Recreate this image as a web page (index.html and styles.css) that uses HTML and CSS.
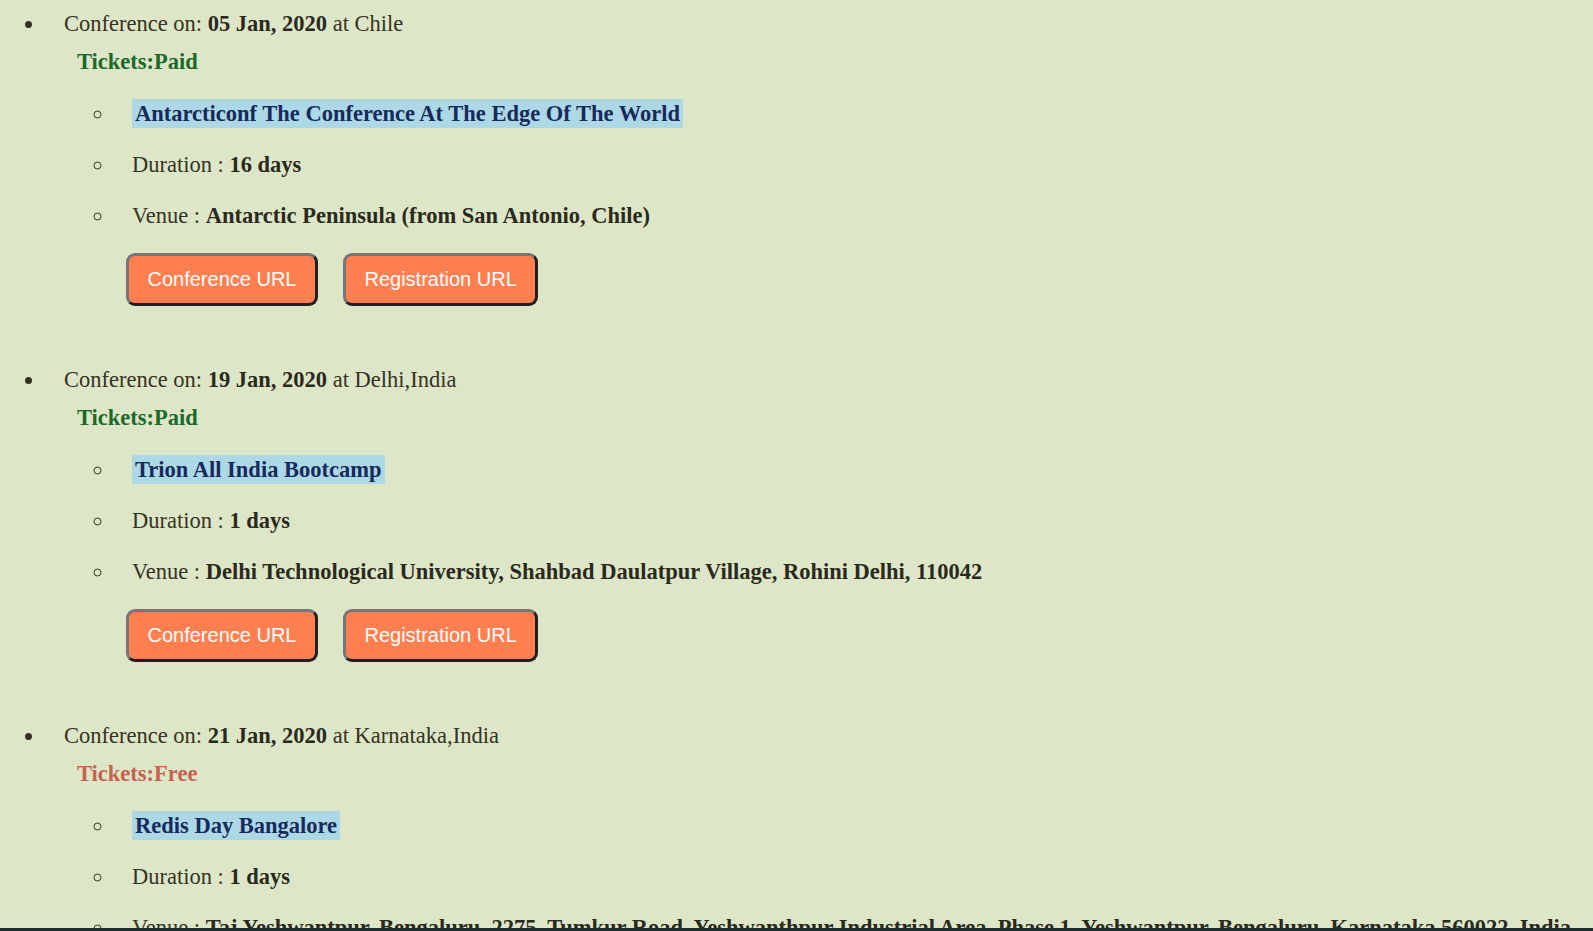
FILE: index.html
```html
<!DOCTYPE html>
<html lang="en">
<head>
<meta charset="utf-8">
<title>Conferences</title>
<link rel="stylesheet" href="styles.css">
</head>
<body>
<ul class="conferences">
  <li class="conf">
    Conference on: <b>05 Jan, 2020</b> at Chile
    <div class="tickets paid">Tickets:Paid</div>
    <ul class="details">
      <li><span class="title">Antarcticonf The Conference At The Edge Of The World</span></li>
      <li>Duration : <b>16 days</b></li>
      <li>Venue : <b>Antarctic Peninsula (from San Antonio, Chile)</b></li>
    </ul>
    <div class="buttons">
      <button class="btn">Conference URL</button>
      <button class="btn">Registration URL</button>
    </div>
  </li>
  <li class="conf">
    Conference on: <b>19 Jan, 2020</b> at Delhi,India
    <div class="tickets paid">Tickets:Paid</div>
    <ul class="details">
      <li><span class="title">Trion All India Bootcamp</span></li>
      <li>Duration : <b>1 days</b></li>
      <li>Venue : <b>Delhi Technological University, Shahbad Daulatpur Village, Rohini Delhi, 110042</b></li>
    </ul>
    <div class="buttons">
      <button class="btn">Conference URL</button>
      <button class="btn">Registration URL</button>
    </div>
  </li>
  <li class="conf">
    Conference on: <b>21 Jan, 2020</b> at Karnataka,India
    <div class="tickets free">Tickets:Free</div>
    <ul class="details">
      <li><span class="title">Redis Day Bangalore</span></li>
      <li>Duration : <b>1 days</b></li>
      <li>Venue : <b>Taj Yeshwantpur, Bengaluru, 2275, Tumkur Road, Yeshwanthpur Industrial Area, Phase 1, Yeshwantpur, Bengaluru, Karnataka 560022, India</b></li>
    </ul>
    <div class="buttons">
      <button class="btn">Conference URL</button>
      <button class="btn">Registration URL</button>
    </div>
  </li>
</ul>
<div class="bottom-edge"></div>
</body>
</html>
```
FILE: styles.css
```css
html, body {
  background: #dee6c8;
}
body {
  margin: 8px;
  font-family: "Liberation Serif", "Times New Roman", serif;
  font-size: 22.5px;
  line-height: 23px;
  color: #35331f;
}
b {
  color: #2a2a1c;
}
.conferences {
  list-style: disc;
  margin: 0;
  padding: 4px 0 0 37px;
}
.conf {
  padding-left: 19px;
  margin-bottom: 62px;
}
.tickets {
  font-weight: bold;
  margin: 15px 0 0 13px;
}
.tickets.paid {
  color: #1a6a2b;
}
.tickets.free {
  color: #c8614f;
}
.details {
  list-style: circle;
  margin: 15px 0 0 0;
  padding-left: 50px;
}
.details li {
  padding: 14px 0 14px 18px;
}
.title {
  font-weight: bold;
  color: #172a5c;
  background: #add8e6;
  padding: 2px 3px 2px 3px;
}
.buttons {
  display: flex;
  gap: 25px;
  margin: 12px 0 0 62px;
}
.btn {
  font-family: "Liberation Sans", Arial, sans-serif;
  font-size: 20px;
  line-height: 23px;
  color: #ffffff;
  background: #ff7f50;
  border-width: 3px;
  border-style: solid;
  border-color: #767676 #1f1f1f #1f1f1f #767676;
  border-radius: 9px;
  padding: 12px 18.5px;
  margin: 0;
}
.bottom-edge {
  position: fixed;
  left: 0;
  right: 0;
  bottom: 0;
  height: 3px;
  background: #1e2c2c;
}
```
